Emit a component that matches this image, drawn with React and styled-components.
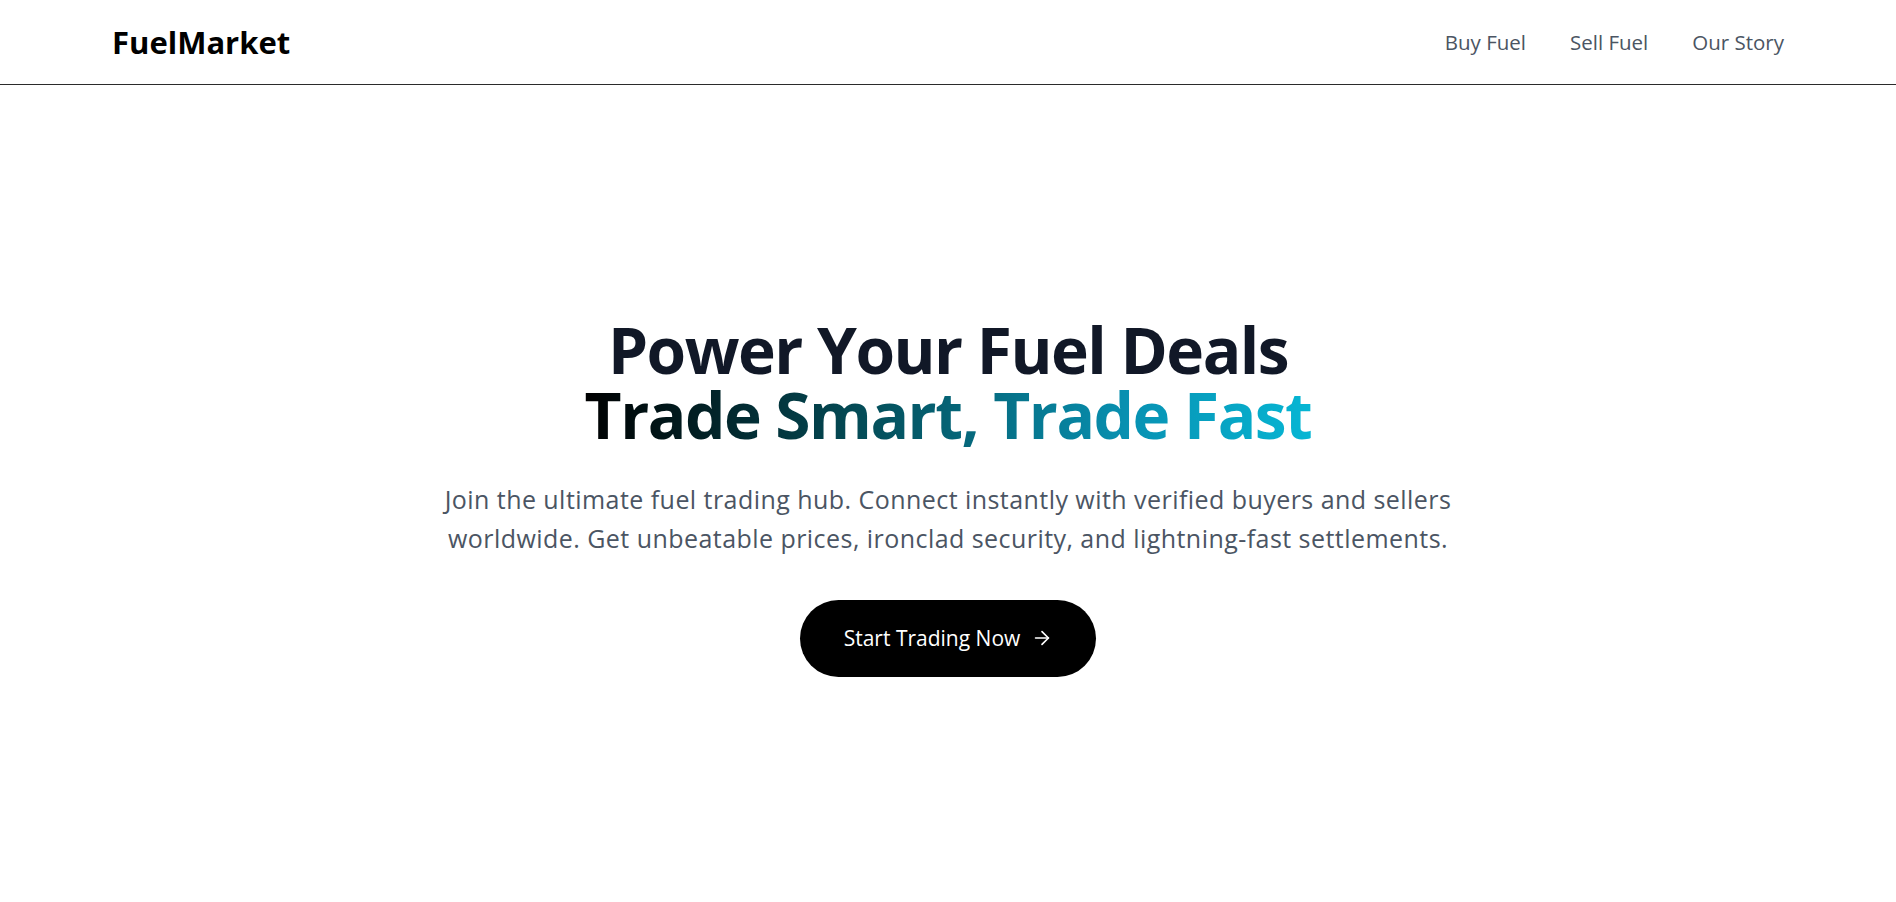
import styled, { createGlobalStyle } from 'styled-components'
import { ArrowRight } from 'lucide-react'

const GlobalStyle = createGlobalStyle`
  * {
    box-sizing: border-box;
  }
  body {
    margin: 0;
    background: #ffffff;
    font-family: 'Open Sans', 'Noto Sans', sans-serif;
  }
`

const Header = styled.header`
  height: 85px;
  display: flex;
  align-items: center;
  justify-content: space-between;
  padding: 0 112px;
  border-bottom: 1px solid #2b2b2b;
`

const Logo = styled.a`
  font-size: 31px;
  font-weight: 700;
  color: #000000;
  text-decoration: none;
`

const Nav = styled.nav`
  display: flex;
  align-items: center;
  gap: 44px;
`

const NavLink = styled.a`
  font-size: 20.5px;
  color: #4b5563;
  text-decoration: none;
`

const Hero = styled.main`
  min-height: calc(100vh - 85px);
  padding-top: 6px;
  display: flex;
  flex-direction: column;
  align-items: center;
  justify-content: center;
  text-align: center;
`

const Title = styled.h1`
  margin: 0 0 33px;
  font-size: 64px;
  line-height: 65px;
  font-weight: 700;
  letter-spacing: -1.5px;
  color: #111827;
`

const TitleLine = styled.span`
  display: block;
`

const GradientLine = styled.span`
  display: inline-block;
  background: linear-gradient(90deg, #000000 0%, #04505c 40%, #0891b2 75%, #06b6d4 100%);
  -webkit-background-clip: text;
  background-clip: text;
  color: transparent;
`

const Lead = styled.p`
  margin: 0 0 42px;
  max-width: 1040px;
  font-size: 25px;
  line-height: 39px;
  letter-spacing: 0.45px;
  color: #4b5563;
`

const CtaButton = styled.button`
  display: inline-flex;
  align-items: center;
  gap: 11px;
  height: 77px;
  padding: 0 43px 0 44px;
  border: none;
  border-radius: 999px;
  background: #000000;
  color: #ffffff;
  font-family: inherit;
  font-size: 21px;
  cursor: pointer;
`

export default function App() {
  return (
    <>
      <GlobalStyle />
      <Header>
        <Logo href="#">FuelMarket</Logo>
        <Nav>
          <NavLink href="#">Buy Fuel</NavLink>
          <NavLink href="#">Sell Fuel</NavLink>
          <NavLink href="#">Our Story</NavLink>
        </Nav>
      </Header>
      <Hero>
        <Title>
          <TitleLine>Power Your Fuel Deals</TitleLine>
          <GradientLine>Trade Smart, Trade Fast</GradientLine>
        </Title>
        <Lead>
          Join the ultimate fuel trading hub. Connect instantly with verified buyers and sellers
          worldwide. Get unbeatable prices, ironclad security, and lightning-fast settlements.
        </Lead>
        <CtaButton>
          Start Trading Now
          <ArrowRight size={22} strokeWidth={1.8} />
        </CtaButton>
      </Hero>
    </>
  )
}
